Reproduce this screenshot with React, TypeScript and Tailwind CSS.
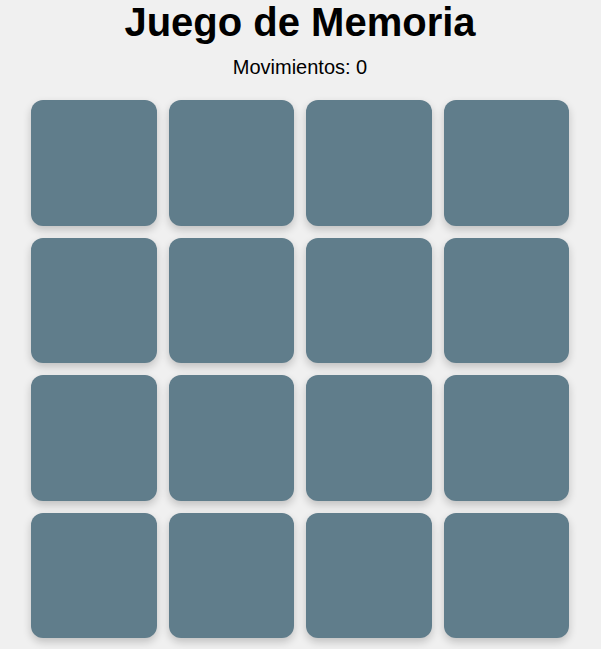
const cards = Array.from({ length: 16 }, (_, i) => i);

export default function App() {
  return (
    <div
      className="flex min-h-screen flex-col items-center bg-[#f0f0f0] pr-px pb-6 text-black"
      style={{ fontFamily: '"Liberation Sans", Arial, sans-serif' }}
    >
      <h1 className="text-[40px] leading-[45px] font-bold">Juego de Memoria</h1>
      <p className="mt-[11px] text-[20px] leading-[23px]">Movimientos: 0</p>

      <div className="mt-[21px] grid w-[538px] grid-cols-4 gap-x-3 gap-y-[12px]">
        {cards.map((c) => (
          <button
            key={c}
            type="button"
            className="aspect-square rounded-xl bg-[#607d8b] shadow-[0_4px_8px_rgba(0,0,0,0.2)]"
          />
        ))}
      </div>
    </div>
  );
}
